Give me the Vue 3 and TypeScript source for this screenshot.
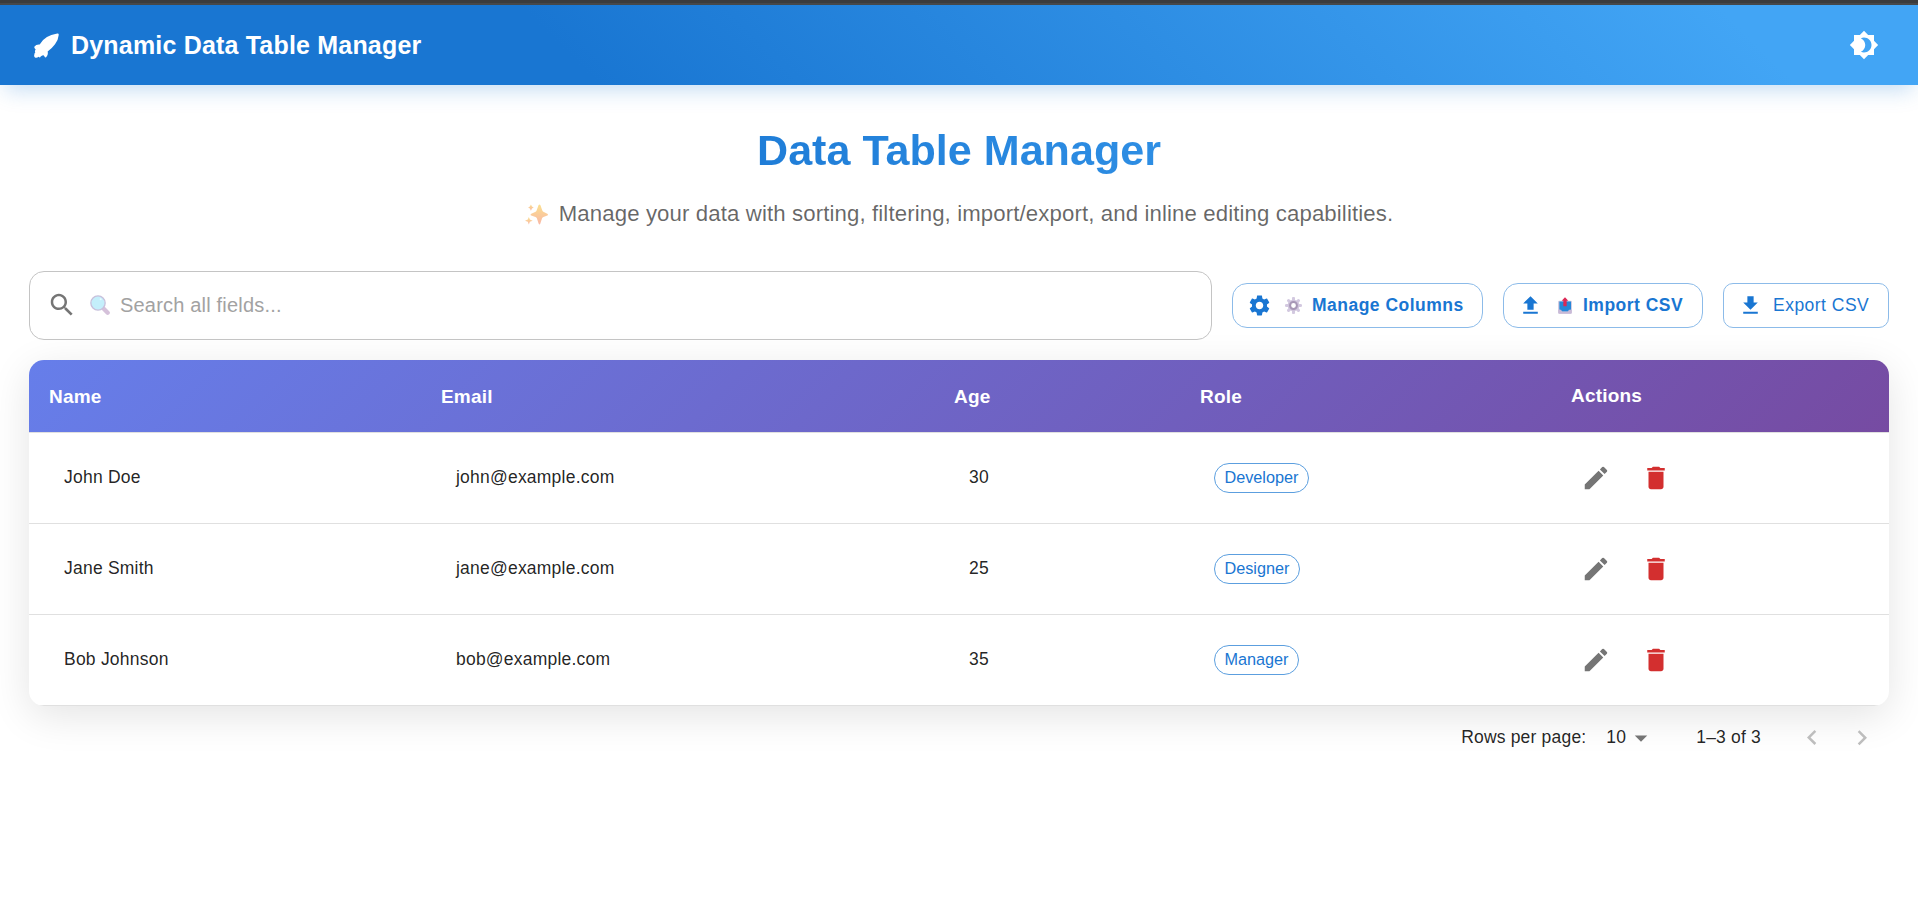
<script setup lang="ts">
interface Person {
  name: string
  email: string
  age: number
  role: string
}

const people: Person[] = [
  { name: 'John Doe', email: 'john@example.com', age: 30, role: 'Developer' },
  { name: 'Jane Smith', email: 'jane@example.com', age: 25, role: 'Designer' },
  { name: 'Bob Johnson', email: 'bob@example.com', age: 35, role: 'Manager' },
]

const columns: string[] = ['Name', 'Email', 'Age', 'Role', 'Actions']

const icons = {
  theme:
    'M20 8.69V4h-4.69L12 .69 8.69 4H4v4.69L.69 12 4 15.31V20h4.69L12 23.31 15.31 20H20v-4.69L23.31 12zM12 18c-.89 0-1.74-.2-2.5-.55C11.56 16.5 13 14.42 13 12s-1.44-4.5-3.5-5.45C10.26 6.2 11.11 6 12 6c3.31 0 6 2.69 6 6s-2.69 6-6 6',
  search:
    'M15.5 14h-.79l-.28-.27C15.41 12.59 16 11.11 16 9.5 16 5.91 13.09 3 9.5 3S3 5.91 3 9.5 5.91 16 9.5 16c1.61 0 3.09-.59 4.23-1.57l.27.28v.79l5 4.99L20.49 19zm-6 0C7.01 14 5 11.99 5 9.5S7.01 5 9.5 5 14 7.01 14 9.5 11.99 14 9.5 14',
  settings:
    'M19.14 12.94c.04-.3.06-.61.06-.94 0-.32-.02-.64-.07-.94l2.03-1.58c.18-.14.23-.41.12-.61l-1.92-3.32c-.12-.22-.37-.29-.59-.22l-2.39.96c-.5-.38-1.03-.7-1.62-.94l-.36-2.54c-.04-.24-.24-.41-.48-.41h-3.84c-.24 0-.43.17-.47.41l-.36 2.54c-.59.24-1.13.57-1.62.94l-2.39-.96c-.22-.08-.47 0-.59.22L2.74 8.87c-.12.21-.08.47.12.61l2.03 1.58c-.05.3-.09.63-.09.94s.02.64.07.94l-2.03 1.58c-.18.14-.23.41-.12.61l1.92 3.32c.12.22.37.29.59.22l2.39-.96c.5.38 1.03.7 1.62.94l.36 2.54c.05.24.24.41.48.41h3.84c.24 0 .44-.17.47-.41l.36-2.54c.59-.24 1.13-.56 1.62-.94l2.39.96c.22.08.47 0 .59-.22l1.92-3.32c.12-.22.07-.47-.12-.61zM12 15.6c-1.98 0-3.6-1.62-3.6-3.6s1.62-3.6 3.6-3.6 3.6 1.62 3.6 3.6-1.62 3.6-3.6 3.6',
  upload: 'M5 20h14v-2H5zm0-10h4v6h6v-6h4l-7-7z',
  download: 'M5 20h14v-2H5zM19 9h-4V3H9v6H5l7 7z',
  edit: 'M3 17.25V21h3.75L17.81 9.94l-3.75-3.75zM20.71 7.04c.39-.39.39-1.02 0-1.41l-2.34-2.34a.9959.9959 0 0 0-1.41 0l-1.83 1.83 3.75 3.75z',
  remove: 'M6 19c0 1.1.9 2 2 2h8c1.1 0 2-.9 2-2V7H6zM19 4h-3.5l-1-1h-5l-1 1H5v2h14z',
  dropdown: 'm7 10 5 5 5-5z',
  previous: 'M15.41 16.09l-4.58-4.59 4.58-4.59L14 5.5l-6 6 6 6z',
  next: 'M8.59 16.34l4.58-4.59-4.58-4.59L10 5.75l6 6-6 6z',
}
</script>

<template>
  <div class="page">
    <div class="top-strip"></div>
    <header class="app-bar">
      <svg class="rocket" viewBox="0 0 75 74">
        <path
          d="M70 1 Q75 0 74 6 Q73 20 63 33 Q54 45 41 55 Q43 64 38 70 Q34 76 31 69 Q29 65 25 67 Q22 68 20 70 Q18 75 14 71 Q8 75 3 73 Q-1 71 1 64 Q1 60 4 57 Q1 54 5 49 Q0 45 1 41 Q6 33 17 34 Q31 7 70 1Z"
        />
      </svg>
      <span class="app-title">Dynamic Data Table Manager</span>
      <svg class="icon theme" viewBox="0 0 24 24"><path :d="icons.theme" /></svg>
    </header>

    <main class="content">
      <h1 class="heading">Data Table Manager</h1>
      <p class="subtitle">
        <svg class="sparkles" viewBox="0 0 66 60">
          <defs>
            <linearGradient id="spark" x1="0" y1="0" x2="0" y2="1">
              <stop offset="0" stop-color="#fbe08f" />
              <stop offset="1" stop-color="#f9b8a6" />
            </linearGradient>
          </defs>
          <g fill="url(#spark)">
            <path d="M39 3 Q42-1 44 3 L50 19 Q51 22 54 23 L64 28 Q68 31 64 33 L53 37 Q50 38 49 41 L44 56 Q42 61 39 56 L34 41 Q33 38 30 37 L18 33 Q14 31 18 28 L29 23 Q32 22 33 19Z" />
            <path d="M17 1 L20 7 25 10 20 13 17 19 14 13 9 10 14 7Z" />
            <path d="M11 37 L14 44 22 48 14 51 11 59 8 51 0 48 8 44Z" />
          </g>
        </svg>
        <span>Manage your data with sorting, filtering, import/export, and inline editing capabilities.</span>
      </p>

      <div class="toolbar">
        <div class="search">
          <svg class="icon search-icon" viewBox="0 0 24 24"><path :d="icons.search" /></svg>
          <svg class="lens" viewBox="0 0 60 60">
            <path d="M42 42 L53 53" stroke="#d5c1da" stroke-width="13" stroke-linecap="round" />
            <circle cx="24" cy="24" r="21.5" fill="#c4effb" stroke="#c8c0dc" stroke-width="4" />
            <circle cx="32" cy="13" r="3" fill="#e8fbff" />
          </svg>
          <span class="placeholder">Search all fields...</span>
        </div>
        <button class="btn btn-strong manage">
          <svg class="icon btn-icon" viewBox="0 0 24 24"><path :d="icons.settings" /></svg>
          <svg class="gear" viewBox="0 0 50 50">
            <path
              d="M25 4V46M4 25H46M10.5 10.5L39.5 39.5M39.5 10.5L10.5 39.5"
              stroke="#d3c9e0"
              stroke-width="9"
              stroke-linecap="round"
            />
            <circle cx="25" cy="25" r="17" fill="#cfc4dc" />
            <circle cx="25" cy="25" r="10" fill="#fff" stroke="#a797b6" stroke-width="6" />
          </svg>
          <span>Manage Columns</span>
        </button>
        <button class="btn btn-strong import">
          <svg class="icon btn-icon" viewBox="0 0 24 24"><path :d="icons.upload" /></svg>
          <svg class="tray" viewBox="0 0 42 50">
            <path d="M0 14 Q0 11 4 11H38Q42 11 42 14V46Q42 50 38 50H4Q0 50 0 46Z" fill="#d3cce2" />
            <path d="M4 13H39V37L32 43H11L4 37Z" fill="#2587d8" />
            <path d="M1 38H9L13 44H29L33 38H41V47Q41 50 37 50H5Q1 50 1 47Z" fill="#c9bad7" />
            <path d="M21 0 L31 11 H26 V27 H16 V11 H11Z" fill="#dc2855" />
          </svg>
          <span>Import CSV</span>
        </button>
        <button class="btn export">
          <svg class="icon btn-icon" viewBox="0 0 24 24"><path :d="icons.download" /></svg>
          <span>Export CSV</span>
        </button>
      </div>

      <section class="table">
        <div class="row head">
          <div v-for="column in columns" :key="column" class="head-cell" :class="{ raised: column === 'Actions' }">
            {{ column }}
          </div>
        </div>
        <div v-for="person in people" :key="person.email" class="row">
          <div class="cell">{{ person.name }}</div>
          <div class="cell">{{ person.email }}</div>
          <div class="cell">{{ person.age }}</div>
          <div class="cell role"><span class="chip">{{ person.role }}</span></div>
          <div class="cell actions">
            <svg class="icon edit" viewBox="0 0 24 24"><path :d="icons.edit" /></svg>
            <svg class="icon remove" viewBox="0 0 24 24"><path :d="icons.remove" /></svg>
          </div>
        </div>
      </section>

      <footer class="pagination">
        <span class="per-page">Rows per page:</span>
        <span class="page-size">10</span>
        <svg class="icon caret" viewBox="0 0 24 24"><path :d="icons.dropdown" /></svg>
        <span class="range">1–3 of 3</span>
        <svg class="icon nav previous" viewBox="0 0 24 24"><path :d="icons.previous" /></svg>
        <svg class="icon nav" viewBox="0 0 24 24"><path :d="icons.next" /></svg>
      </footer>
    </main>
  </div>
</template>

<style>
body {
  margin: 0;
  background: #fff;
}
</style>

<style scoped>
* {
  box-sizing: border-box;
}
.page {
  height: 911px;
  overflow: hidden;
  font-family: 'Liberation Sans', Arial, sans-serif;
  color: rgba(0, 0, 0, 0.87);
}
.top-strip {
  height: 5px;
  background: #3c3c3c;
  border-bottom: 2px solid #484848;
}
.icon {
  width: 30px;
  height: 30px;
  fill: currentColor;
  flex: none;
}
.app-bar {
  height: 80px;
  padding: 0 39px 0 34px;
  display: flex;
  align-items: center;
  color: #fff;
  background: linear-gradient(45deg, #1976d2 30%, #42a5f5 90%);
  box-shadow: 0 10px 20px -5px rgba(25, 118, 210, 0.25);
}
.rocket {
  width: 25px;
  height: 25px;
  fill: #fff;
}
.app-title {
  margin-left: 12px;
  font-size: 25px;
  font-weight: 700;
  letter-spacing: 0.19px;
}
.theme {
  margin-left: auto;
}
.content {
  padding: 0 29px;
}
.heading {
  margin: 36px 0 0;
  height: 58px;
  line-height: 58px;
  text-align: center;
  font-size: 43.1px;
  font-weight: 700;
  color: transparent;
  background: linear-gradient(45deg, #1976d2 30%, #42a5f5 90%);
  -webkit-background-clip: text;
  background-clip: text;
}
.subtitle {
  margin: 17px 0 0;
  height: 36px;
  display: flex;
  align-items: center;
  justify-content: center;
  font-size: 22.2px;
  letter-spacing: 0.12px;
  color: rgba(0, 0, 0, 0.6);
  white-space: nowrap;
}
.sparkles {
  width: 23px;
  height: 21px;
  margin-right: 11px;
}
.toolbar {
  margin-top: 39px;
  height: 69px;
  display: flex;
  align-items: center;
  gap: 20px;
}
.search {
  width: 1183px;
  height: 69px;
  border: 1px solid #c4c4c4;
  border-radius: 15px;
  padding: 0 0 2px 17px;
  display: flex;
  align-items: center;
}
.search-icon {
  color: #757575;
}
.lens {
  width: 20px;
  height: 20px;
  margin-left: 13px;
  fill: none;
}
.placeholder {
  margin-left: 10px;
  padding-top: 1px;
  font-size: 20px;
  letter-spacing: 0.19px;
  color: #a2a2a2;
}
.btn {
  height: 45px;
  padding: 0 0 1px 14px;
  display: flex;
  align-items: center;
  border: 1px solid #8cbbe9;
  border-radius: 10px;
  background: transparent;
  color: #1976d2;
  font-family: inherit;
  font-size: 17.5px;
  letter-spacing: 0.48px;
  white-space: nowrap;
}
.btn-strong {
  border-radius: 15px;
  font-weight: 700;
}
.manage {
  width: 251px;
}
.import {
  width: 200px;
}
.export {
  width: 166px;
}
.btn-icon {
  width: 25px;
  height: 25px;
}
.gear {
  width: 17px;
  height: 17px;
  margin: 0 10px 0 13px;
}
.tray {
  width: 14px;
  height: 17px;
  margin: 0 11px 0 15px;
}
.export span {
  margin-left: 10px;
}
.table {
  margin-top: 20px;
  border-radius: 15px;
  overflow: hidden;
  background: #fff;
  box-shadow: 0 10px 40px rgba(0, 0, 0, 0.11);
}
.row {
  height: 91px;
  display: grid;
  grid-template-columns: 392px 513px 246px 371px 1fr;
  align-items: center;
  border-bottom: 1px solid #e0e0e0;
}
.head {
  height: 73px;
  color: #fff;
  background: linear-gradient(135deg, #667eea 0%, #764ba2 100%);
}
.head-cell {
  padding: 1px 0 0 20px;
  font-size: 19px;
  font-weight: 700;
  letter-spacing: 0.2px;
}
.head-cell.raised {
  padding-top: 0;
  padding-bottom: 1px;
}
.cell {
  padding-left: 35px;
  padding-bottom: 2px;
  font-size: 17.5px;
  letter-spacing: 0.22px;
}
.role {
  padding-left: 34px;
  padding-bottom: 0;
  display: flex;
}
.chip {
  height: 30px;
  padding: 0 9.4px 1px;
  display: flex;
  align-items: center;
  border: 1px solid #5c9fdf;
  border-radius: 15px;
  color: #1976d2;
  font-size: 16.25px;
  letter-spacing: 0;
}
.actions {
  padding-left: 30px;
  padding-bottom: 0;
  display: flex;
  gap: 30px;
}
.edit {
  color: #757575;
}
.remove {
  color: #d32f2f;
}
.pagination {
  height: 63px;
  display: flex;
  align-items: center;
  justify-content: flex-end;
  padding-right: 12px;
  font-size: 17.5px;
  letter-spacing: 0.19px;
}
.page-size {
  margin-left: 20px;
}
.caret {
  color: #757575;
}
.range {
  margin-left: 40px;
}
.nav {
  color: #bdbdbd;
}
.previous {
  margin: 0 20px 0 36px;
}
</style>
